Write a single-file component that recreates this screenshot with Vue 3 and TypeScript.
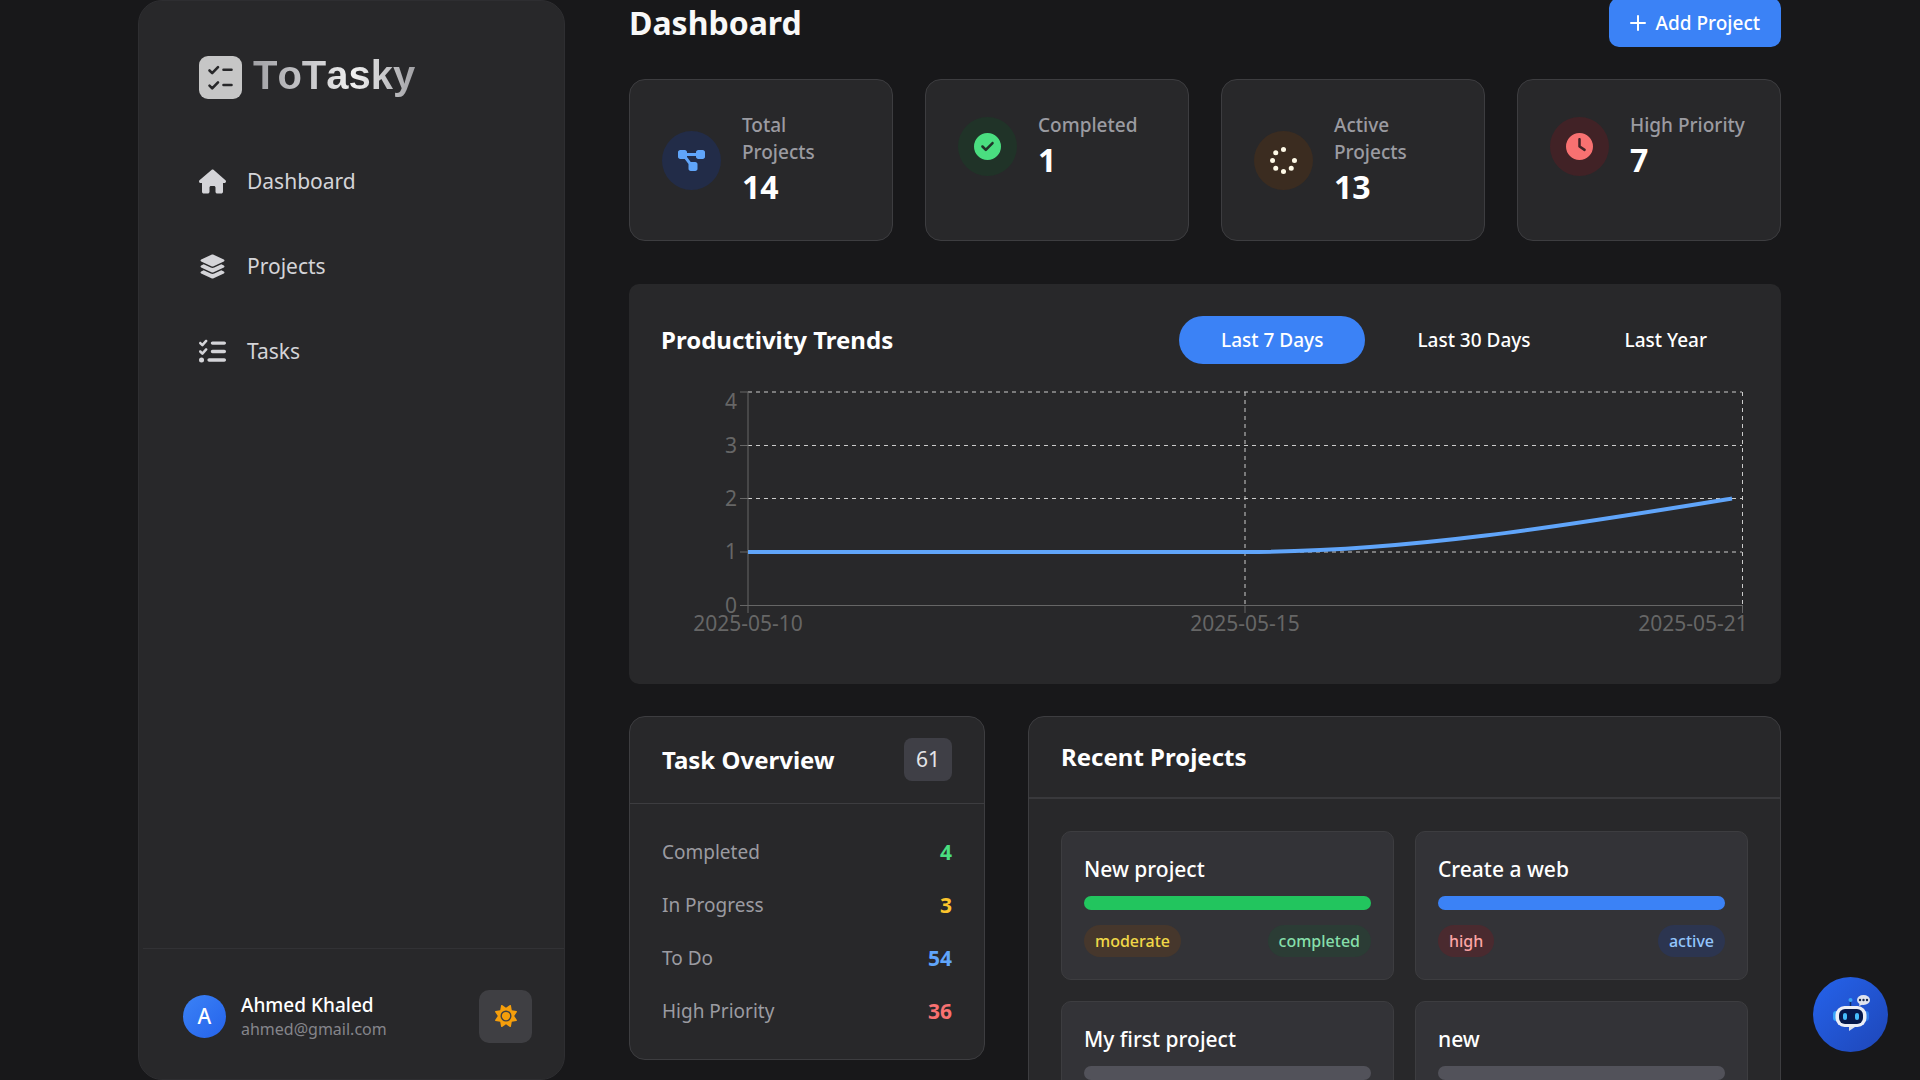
<script setup lang="ts">
import { ref } from 'vue'

interface IconShape {
  box: string
  d: string
}

const icons: Record<string, IconShape> = {
  home: {
    box: '0 0 576 512',
    d: 'M575.8 255.5c0 18-15 32.1-32 32.1h-32l.7 160.2c0 2.7-.2 5.4-.5 8.1V472c0 22.1-17.9 40-40 40H456c-1.1 0-2.2 0-3.3-.1c-1.4 .1-2.8 .1-4.2 .1H416 392c-22.1 0-40-17.9-40-40V448 384c0-17.7-14.3-32-32-32H256c-17.7 0-32 14.3-32 32v64 24c0 22.1-17.9 40-40 40H160 128.1c-1.5 0-3-.1-4.5-.2c-1.2 .1-2.4 .2-3.6 .2H104c-22.1 0-40-17.9-40-40V360c0-.9 0-1.9 .1-2.8V287.6H32c-18 0-32-14-32-32.1c0-9 3-17 10-24L266.4 8c7-7 15-8 22-8s15 2 21 7L564.8 231.5c8 7 12 15 11 24z',
  },
  layers: {
    box: '0 0 576 512',
    d: 'M264.5 5.2c14.9-6.9 32.1-6.9 47 0l218.6 101c8.5 3.9 13.9 12.4 13.9 21.8s-5.4 17.9-13.9 21.8l-218.6 101c-14.9 6.9-32.1 6.9-47 0L45.9 149.8C37.4 145.8 32 137.3 32 128s5.4-17.9 13.9-21.8L264.5 5.2zM476.9 209.6l53.2 24.6c8.5 3.9 13.9 12.4 13.9 21.8s-5.4 17.9-13.9 21.8l-218.6 101c-14.9 6.9-32.1 6.9-47 0L45.9 277.8C37.4 273.8 32 265.3 32 256s5.4-17.9 13.9-21.8l53.2-24.6 152 70.2c23.4 10.8 50.4 10.8 73.8 0l152-70.2zm-152 198.2l152-70.2 53.2 24.6c8.5 3.9 13.9 12.4 13.9 21.8s-5.4 17.9-13.9 21.8l-218.6 101c-14.9 6.9-32.1 6.9-47 0L45.9 405.8C37.4 401.8 32 393.3 32 384s5.4-17.9 13.9-21.8l53.2-24.6 152 70.2c23.4 10.8 50.4 10.8 73.8 0z',
  },
  tasks: {
    box: '0 0 512 512',
    d: 'M152.1 38.2c9.9 8.9 10.7 24 1.8 33.9l-72 80c-4.4 4.9-10.6 7.8-17.2 7.9s-12.9-2.4-17.6-7L7 113C-2.3 103.6-2.3 88.4 7 79s24.6-9.4 33.9 0l22.1 22.1 55.1-61.2c8.9-9.9 24-10.7 33.9-1.8zm0 160c9.9 8.9 10.7 24 1.8 33.9l-72 80c-4.4 4.9-10.6 7.8-17.2 7.9s-12.9-2.4-17.6-7L7 273c-9.4-9.4-9.4-24.6 0-33.9s24.6-9.4 33.9 0l22.1 22.1 55.1-61.2c8.9-9.9 24-10.7 33.9-1.8zM224 96c0-17.7 14.3-32 32-32H480c17.7 0 32 14.3 32 32s-14.3 32-32 32H256c-17.7 0-32-14.3-32-32zm0 160c0-17.7 14.3-32 32-32H480c17.7 0 32 14.3 32 32s-14.3 32-32 32H256c-17.7 0-32-14.3-32-32zM160 416c0-17.7 14.3-32 32-32H480c17.7 0 32 14.3 32 32s-14.3 32-32 32H192c-17.7 0-32-14.3-32-32zM48 368a48 48 0 1 1 0 96 48 48 0 1 1 0-96z',
  },
  diagram: {
    box: '0 0 576 512',
    d: 'M0 80C0 53.5 21.5 32 48 32h96c26.5 0 48 21.5 48 48V96H384V80c0-26.5 21.5-48 48-48h96c26.5 0 48 21.5 48 48v96c0 26.5-21.5 48-48 48H432c-26.5 0-48-21.5-48-48V160H192v16c0 1.7-.1 3.4-.3 5L272 288h96c26.5 0 48 21.5 48 48v96c0 26.5-21.5 48-48 48H272c-26.5 0-48-21.5-48-48V336c0-1.7 .1-3.4 .3-5L144 224H48c-26.5 0-48-21.5-48-48V80z',
  },
  check: {
    box: '0 0 512 512',
    d: 'M256 512A256 256 0 1 0 256 0a256 256 0 1 0 0 512zM369 209L241 337c-9.4 9.4-24.6 9.4-33.9 0l-64-64c-9.4-9.4-9.4-24.6 0-33.9s24.6-9.4 33.9 0l47 47L335 175c9.4-9.4 24.6-9.4 33.9 0s9.4 24.6 0 33.9z',
  },
  spinner: {
    box: '0 0 512 512',
    d: 'M304 48a48 48 0 1 1-96 0 48 48 0 1 1 96 0zM304 464a48 48 0 1 1-96 0 48 48 0 1 1 96 0zM96 256a48 48 0 1 1-96 0 48 48 0 1 1 96 0zM512 256a48 48 0 1 1-96 0 48 48 0 1 1 96 0zM157 109a48 48 0 1 1-96 0 48 48 0 1 1 96 0zM157 403a48 48 0 1 1-96 0 48 48 0 1 1 96 0zM451 403a48 48 0 1 1-96 0 48 48 0 1 1 96 0z',
  },
  clock: {
    box: '0 0 512 512',
    d: 'M256 0a256 256 0 1 1 0 512A256 256 0 1 1 256 0zM232 120V256c0 8 4 15.5 10.7 20l96 64c11 7.4 25.9 4.4 33.3-6.7s4.4-25.9-6.7-33.3L280 243.2V120c0-13.3-10.7-24-24-24s-24 10.7-24 24z',
  },
  sun: {
    box: '0 0 512 512',
    d: 'M361.5 1.2c5 2.1 8.6 6.6 9.6 11.9L391 121l107.9 19.8c5.3 1 9.8 4.6 11.9 9.6s1.5 10.7-1.6 15.2L446.9 256l62.3 90.3c3.1 4.5 3.7 10.2 1.6 15.2s-6.6 8.6-11.9 9.6L391 391 371.1 498.9c-1 5.3-4.6 9.8-9.6 11.9s-10.7 1.5-15.2-1.6L256 446.9l-90.3 62.3c-4.5 3.1-10.2 3.7-15.2 1.6s-8.6-6.6-9.6-11.9L121 391 13.1 371.1c-5.3-1-9.8-4.6-11.9-9.6s-1.5-10.7 1.6-15.2L65.1 256 2.8 165.7c-3.1-4.5-3.7-10.2-1.6-15.2s6.6-8.6 11.9-9.6L121 121 140.9 13.1c1-5.3 4.6-9.8 9.6-11.9s10.7-1.5 15.2 1.6L256 65.1 346.3 2.8c4.5-3.1 10.2-3.7 15.2-1.6zM160 256a96 96 0 1 1 192 0 96 96 0 1 1-192 0zm224 0a128 128 0 1 0-256 0 128 128 0 1 0 256 0z',
  },
}

const nav = [
  { label: 'Dashboard', icon: icons.home },
  { label: 'Projects', icon: icons.layers },
  { label: 'Tasks', icon: icons.tasks },
]

const stats = [
  { label: 'Total Projects', value: 14, icon: icons.diagram, tone: 'blue' },
  { label: 'Completed', value: 1, icon: icons.check, tone: 'green' },
  { label: 'Active Projects', value: 13, icon: icons.spinner, tone: 'amber' },
  { label: 'High Priority', value: 7, icon: icons.clock, tone: 'red' },
]

const ranges = ['Last 7 Days', 'Last 30 Days', 'Last Year']
const activeRange = ref(ranges[0])

const yTicks = [
  { value: 4, y: 7, labelY: 24 },
  { value: 3, y: 60.5, labelY: 68 },
  { value: 2, y: 113.5, labelY: 121 },
  { value: 1, y: 167, labelY: 174 },
  { value: 0, y: 220.5, labelY: 228 },
]

const xTicks = [
  { label: '2025-05-10', x: 87, labelX: 87 },
  { label: '2025-05-15', x: 584, labelX: 584 },
  { label: '2025-05-21', x: 1081.5, labelX: 1032 },
]

const overview = [
  { label: 'Completed', value: 4, tone: 'green' },
  { label: 'In Progress', value: 3, tone: 'yellow' },
  { label: 'To Do', value: 54, tone: 'blue' },
  { label: 'High Priority', value: 36, tone: 'red' },
]

interface Project {
  name: string
  bar: string
  priority?: string
  status?: string
}

const projects: Project[] = [
  { name: 'New project', bar: 'completed', priority: 'moderate', status: 'completed' },
  { name: 'Create a web', bar: 'active', priority: 'high', status: 'active' },
  { name: 'My first project', bar: 'idle' },
  { name: 'new', bar: 'idle' },
]
</script>

<template>
  <div class="shell">
    <aside class="sidebar">
      <div class="brand">
        <svg class="brand-mark" viewBox="0 0 43 43" aria-hidden="true">
          <rect width="43" height="43" rx="9" fill="#c6c6c6" />
          <g fill="none" stroke="#28282a" stroke-width="2.6" stroke-linecap="round" stroke-linejoin="round">
            <path d="M10.5 14.5l2.7 2.7 5.8-6M24.5 13.8h8M10.5 29.7l2.7 2.7 5.8-6M24.5 29h8" />
          </g>
        </svg>
        <span class="brand-name">ToTasky</span>
      </div>

      <nav class="nav">
        <a v-for="item in nav" :key="item.label" href="#" class="nav-link">
          <svg class="nav-icon" :viewBox="item.icon.box" aria-hidden="true"><path :d="item.icon.d" /></svg>
          <span>{{ item.label }}</span>
        </a>
      </nav>

      <footer class="account">
        <span class="avatar">A</span>
        <div class="identity">
          <span class="name">Ahmed Khaled</span>
          <span class="email">ahmed@gmail.com</span>
        </div>
        <button type="button" class="theme" aria-label="Toggle theme">
          <svg :viewBox="icons.sun.box" aria-hidden="true"><path :d="icons.sun.d" fill-rule="evenodd" /></svg>
        </button>
      </footer>
    </aside>

    <main class="content">
      <header class="top">
        <h1>Dashboard</h1>
        <button type="button" class="add">
          <svg viewBox="0 0 16 16" aria-hidden="true">
            <path d="M8 1v14M1 8h14" stroke="#fff" stroke-width="2" stroke-linecap="round" />
          </svg>
          Add Project
        </button>
      </header>

      <section class="stats">
        <article v-for="stat in stats" :key="stat.label" class="stat">
          <div class="stat-body">
            <span class="disc" :class="stat.tone">
              <svg :viewBox="stat.icon.box" aria-hidden="true"><path :d="stat.icon.d" /></svg>
            </span>
            <div>
              <p class="stat-label">{{ stat.label }}</p>
              <p class="stat-value">{{ stat.value }}</p>
            </div>
          </div>
        </article>
      </section>

      <section class="trends">
        <div class="trends-head">
          <h2>Productivity Trends</h2>
          <div class="ranges">
            <button
              v-for="range in ranges"
              :key="range"
              type="button"
              class="range"
              :class="{ on: range === activeRange }"
              @click="activeRange = range"
            >
              {{ range }}
            </button>
          </div>
        </div>
        <svg class="chart" viewBox="0 0 1088 267" role="img" aria-label="Productivity trends">
          <g stroke="#ccc" stroke-dasharray="4 4">
            <line v-for="t in yTicks.slice(0, 4)" :key="t.value" x1="87" x2="1081" :y1="t.y" :y2="t.y" />
            <line v-for="t in xTicks.slice(1)" :key="t.label" y1="7" y2="220" :x1="t.x" :x2="t.x" />
          </g>
          <g stroke="#666">
            <line x1="87" x2="87" y1="7" y2="220" />
            <line x1="87" x2="1082" y1="220.5" y2="220.5" />
            <line v-for="t in yTicks" :key="t.value" x1="79" x2="87" :y1="t.y" :y2="t.y" />
            <line v-for="t in xTicks" :key="t.label" y1="220" y2="228" :x1="t.x" :x2="t.x" />
          </g>
          <g class="axis">
            <text v-for="t in yTicks" :key="t.value" x="76" :y="t.labelY" text-anchor="end">{{ t.value }}</text>
            <text v-for="t in xTicks" :key="t.label" :x="t.labelX" y="246" text-anchor="middle">{{ t.label }}</text>
          </g>
          <path d="M87 167H584C746 167 909 140 1071 113.5" fill="none" stroke="#60a5fa" stroke-width="4" />
        </svg>
      </section>

      <div class="columns">
        <section class="panel overview">
          <div class="overview-head">
            <h2>Task Overview</h2>
            <span class="count">61</span>
          </div>
          <dl class="rows">
            <div v-for="row in overview" :key="row.label" class="row">
              <dt>{{ row.label }}</dt>
              <dd :class="row.tone">{{ row.value }}</dd>
            </div>
          </dl>
        </section>

        <section class="panel recent">
          <div class="recent-head">
            <h2>Recent Projects</h2>
          </div>
          <div class="projects">
            <article v-for="project in projects" :key="project.name" class="project">
              <h3>{{ project.name }}</h3>
              <div class="bar" :class="project.bar"></div>
              <div v-if="project.status" class="tags">
                <span class="tag" :class="project.priority">{{ project.priority }}</span>
                <span class="tag" :class="project.status">{{ project.status }}</span>
              </div>
            </article>
          </div>
        </section>
      </div>
    </main>

    <button type="button" class="bot" aria-label="Open assistant">
      <svg viewBox="0 0 75 75" aria-hidden="true">
        <rect x="20" y="34" width="6" height="10" rx="3" fill="#38a4f8" />
        <rect x="50" y="34" width="6" height="10" rx="3" fill="#2f7bea" />
        <path d="M37.5 24v6" stroke="#0f2a66" stroke-width="1.5" />
        <circle cx="37.5" cy="23" r="2" fill="#38a4f8" />
        <path d="M36 47v7l9-6z" fill="#dfe3ee" />
        <rect x="22.5" y="29" width="31" height="21" rx="9" fill="#eceef5" />
        <rect x="26" y="32" width="24" height="15" rx="6" fill="#07194a" />
        <rect x="30" y="36" width="4" height="7" rx="2" fill="#45bdfb" />
        <rect x="42" y="36" width="4" height="7" rx="2" fill="#45bdfb" />
        <path d="M47 25l-1 4 5-2z" fill="#dfe3ee" />
        <ellipse cx="50.5" cy="23" rx="6.5" ry="5" fill="#dfe3ee" />
        <g fill="#1b2a4d">
          <circle cx="47" cy="23" r="1.2" />
          <circle cx="50.5" cy="23" r="1.2" />
          <circle cx="54" cy="23" r="1.2" />
        </g>
      </svg>
    </button>
  </div>
</template>

<style>
body {
  background: #18181a;
}
</style>

<style scoped>
* {
  box-sizing: border-box;
}

h1,
h2,
h3,
p,
dl,
dd {
  margin: 0;
}

button {
  border: 0;
  padding: 0;
  font: inherit;
  cursor: pointer;
}

.shell {
  display: flex;
  gap: 64px;
  height: 100vh;
  padding: 0 139px 0 138px;
  overflow: hidden;
  background: #18181a;
  color: #fff;
  font-family: 'Noto Sans', sans-serif;
}

.sidebar {
  display: flex;
  flex: none;
  flex-direction: column;
  width: 427px;
  border: 1px solid #2e2e31;
  border-radius: 24px;
  background: #28282a;
}

.brand {
  display: flex;
  align-items: flex-start;
  gap: 11px;
  padding: 48px 60px 0;
}

.brand-mark {
  width: 43px;
  height: 43px;
  margin-top: 7px;
}

.brand-name {
  background: linear-gradient(90deg, #a1a1a5, #c8c8cb 35%, #f0f0f0 62%, #a1a1a5);
  background-clip: text;
  color: transparent;
  font: bold 40px/53px 'Liberation Sans', sans-serif;
  font-kerning: none;
}

.nav {
  display: flex;
  flex: 1;
  flex-direction: column;
  gap: 21px;
  padding: 47px 60px;
}

.nav-link {
  display: flex;
  align-items: center;
  gap: 21px;
  height: 64px;
  color: #d4d4d8;
  font-size: 21px;
  text-decoration: none;
}

.nav-icon {
  width: 27px;
  height: 27px;
  fill: #d4d4d8;
}

.account {
  display: flex;
  align-items: center;
  height: 131px;
  margin-left: 4px;
  padding: 4px 32px 0 40px;
  border-top: 1px solid #323235;
}

.avatar {
  width: 43px;
  height: 43px;
  border-radius: 50%;
  background: linear-gradient(135deg, #3b82f6, #2563eb);
  font-size: 21px;
  font-weight: 500;
  line-height: 43px;
  text-align: center;
}

.identity {
  display: flex;
  flex: 1;
  flex-direction: column;
  margin-left: 15px;
}

.name {
  font-size: 19px;
  font-weight: 500;
  line-height: 27px;
}

.email {
  color: #85858a;
  font-size: 16px;
  line-height: 21px;
}

.theme {
  display: grid;
  place-items: center;
  width: 53px;
  height: 53px;
  border-radius: 10px;
  background: #3f3f43;
}

.theme svg {
  width: 22px;
  height: 22px;
  fill: #f59e0b;
}

.content {
  flex: 1;
  min-width: 0;
  margin-top: -2px;
}

.top {
  display: flex;
  align-items: center;
  justify-content: space-between;
}

h1 {
  color: #f8f8f8;
  font-size: 32px;
  font-weight: 700;
  line-height: 43px;
}

.add {
  display: flex;
  align-items: center;
  gap: 10px;
  height: 49px;
  padding: 0 21px;
  border-radius: 10px;
  background: #3b82f6;
  color: #fff;
  font-size: 19px;
  font-weight: 500;
}

.add svg {
  width: 16px;
  height: 16px;
}

.stats {
  display: grid;
  grid-template-columns: repeat(4, minmax(0, 1fr));
  gap: 32px;
  margin-top: 32px;
}

.stat {
  padding: 32px;
  border: 1px solid #3d3d40;
  border-radius: 16px;
  background: #28282a;
}

.stat-body {
  display: flex;
  align-items: center;
  gap: 21px;
}

.disc {
  display: grid;
  flex: none;
  place-items: center;
  width: 59px;
  height: 59px;
  border-radius: 50%;
}

.disc svg {
  width: 27px;
  height: 27px;
  fill: currentColor;
}

.disc.blue {
  background: #222c48;
  color: #60a5fa;
}

.disc.green {
  background: #203328;
  color: #4ade80;
}

.disc.amber {
  background: #3b2c20;
  color: #fef9e7;
}

.disc.red {
  background: #412226;
  color: #f87171;
}

.stat-label {
  color: #9b9ba1;
  font-size: 19px;
  font-weight: 500;
  line-height: 27px;
}

.stat-value {
  font-size: 32px;
  font-weight: 700;
  line-height: 42px;
}

.trends {
  margin-top: 43px;
  padding: 32px;
  border-radius: 10px;
  background: #28282a;
}

.trends-head {
  display: flex;
  align-items: center;
  justify-content: space-between;
}

h2 {
  font-size: 24px;
  font-weight: 700;
  line-height: 32px;
}

.ranges {
  display: flex;
  gap: 10px;
}

.range {
  height: 48px;
  padding: 0 42px;
  border-radius: 24px;
  background: transparent;
  color: #fff;
  font-size: 19px;
  font-weight: 500;
}

.range.on {
  background: #3b82f6;
}

.chart {
  display: block;
  width: 100%;
  margin-top: 21px;
}

.axis {
  fill: #666;
  font-size: 21px;
}

.columns {
  display: grid;
  grid-template-columns: minmax(0, 356fr) minmax(0, 753fr);
  align-items: start;
  gap: 43px;
  margin-top: 32px;
}

.panel {
  border: 1px solid #3d3d40;
  border-radius: 16px;
  background: #28282a;
}

.overview-head {
  display: flex;
  align-items: center;
  justify-content: space-between;
  padding: 21px 32px 22px;
  border-bottom: 1px solid #3d3d40;
}

.count {
  padding: 0 12px;
  border-radius: 8px;
  background: #3f3f46;
  color: #e4e4e7;
  font-size: 21px;
  line-height: 43px;
}

.rows {
  display: flex;
  flex-direction: column;
  gap: 21px;
  padding: 32px;
}

.row {
  display: flex;
  align-items: center;
  justify-content: space-between;
  line-height: 32px;
}

.row dt {
  color: #9b9ba1;
  font-size: 19px;
}

.row dd {
  font-size: 21px;
  font-weight: 700;
}

dd.green {
  color: #4ade80;
}

dd.yellow {
  color: #fbc52d;
}

dd.blue {
  color: #60a5fa;
}

dd.red {
  color: #f87171;
}

.recent-head {
  padding: 24px 32px;
  border-bottom: 2px solid #39393c;
}

.projects {
  display: grid;
  grid-template-columns: repeat(2, minmax(0, 1fr));
  gap: 21px;
  padding: 32px;
}

.project {
  padding: 21px 22px 22px;
  border: 1px solid #3d3d40;
  border-radius: 10px;
  background: #333337;
}

h3 {
  font-size: 21px;
  font-weight: 500;
  line-height: 32px;
}

.bar {
  height: 14px;
  margin-top: 11px;
  border-radius: 7px;
}

.bar.completed {
  background: #22c55e;
}

.bar.active {
  background: #3b82f6;
}

.bar.idle {
  background: #52525a;
}

.tags {
  display: flex;
  justify-content: space-between;
  margin-top: 15px;
}

.tag {
  padding: 0 11px;
  border-radius: 16px;
  font-size: 16px;
  font-weight: 500;
  line-height: 32px;
}

.tag.moderate {
  background: #46372c;
  color: #f0d848;
}

.tag.completed {
  background: #2b3c35;
  color: #86dfaa;
}

.tag.high {
  background: #4a2a2f;
  color: #fca5a5;
}

.tag.active {
  background: #2c3550;
  color: #93c5fd;
}

.bot {
  position: fixed;
  right: 32px;
  bottom: 28px;
  width: 75px;
  height: 75px;
  border-radius: 50%;
  background: linear-gradient(135deg, #2563eb, #1e46b8);
}

.bot svg {
  display: block;
  width: 75px;
  height: 75px;
}
</style>
